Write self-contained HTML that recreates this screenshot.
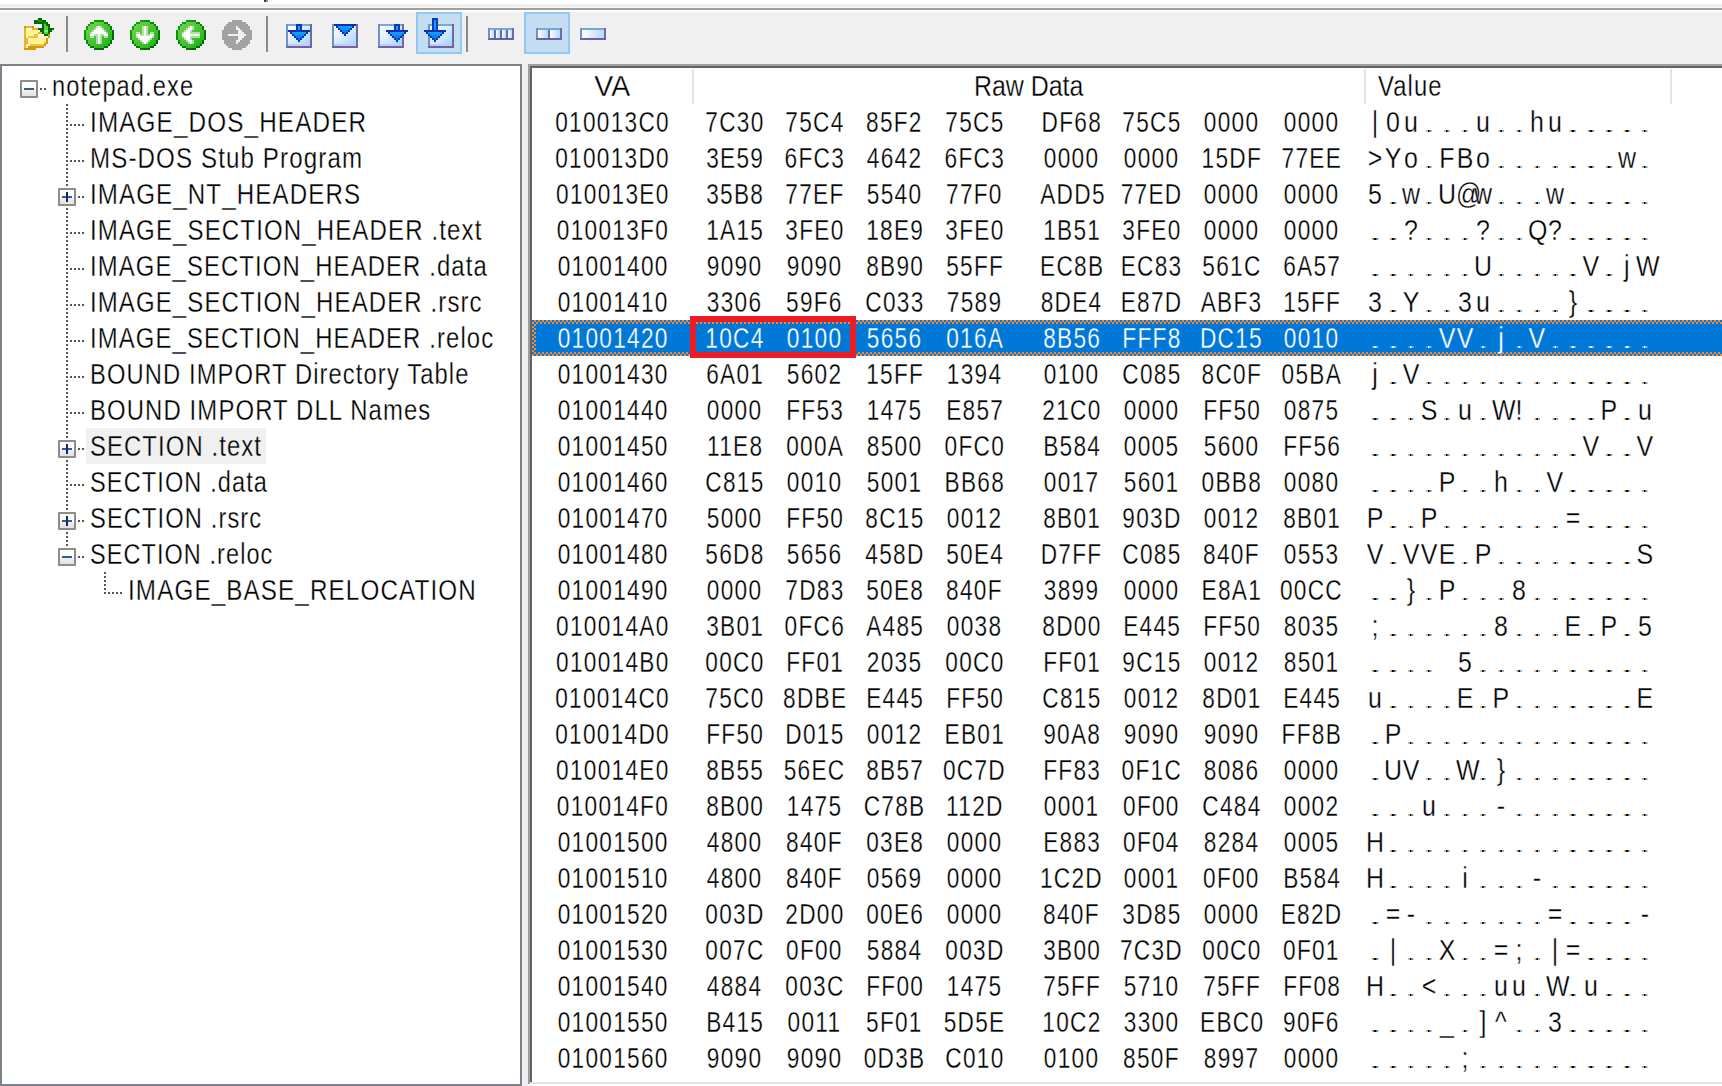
<!DOCTYPE html>
<html><head><meta charset="utf-8"><style>
*{margin:0;padding:0;box-sizing:border-box}
html,body{width:1722px;height:1086px;overflow:hidden;background:#f0f0f0}
body{position:relative;font-family:"Liberation Sans",sans-serif;color:#000}
.t,.c,.v{-webkit-text-stroke:0.3px #fff}
.s{-webkit-text-stroke:0.3px #0078d7}
.a{position:absolute}
.t{position:absolute;height:36px;line-height:36px;font-size:29px;white-space:pre;transform-origin:0 0}
.ts{transform:scaleX(0.82);letter-spacing:1.36px}
.c{position:absolute;height:36px;line-height:36px;font-size:29px;white-space:pre;text-align:center}
.c span{display:inline-block;transform:scaleX(0.78);letter-spacing:1.66px;margin-right:-1.66px}
.v{position:absolute;height:36px;line-height:36px;font-size:29px;white-space:pre;transform:scaleX(0.86);transform-origin:0 0}
.v span{display:inline-block;width:20.93px;text-align:center}
.v i{display:inline-block;width:2.33px;height:2px;background:#000;box-shadow:-2.33px 0 0 #f2b060,2.33px 0 0 #60b0f0}
.v.s i{background:#fff;box-shadow:-2.33px 0 0 #4a8ee0,2.33px 0 0 #5ab4f0}
.box{position:absolute;width:18px;height:18px;border:2px solid #8c8c8c;border-radius:1px;background:linear-gradient(#fff 0,#fff 45%,#f0f0f0 60%,#e2e2e2 100%)}
.hb{position:absolute;left:2px;top:6px;width:10px;height:2px;background:#3a56a4}
.vb{position:absolute;left:6px;top:2px;width:2px;height:10px;background:#102a6c}
.dh{position:absolute;height:2px;background:repeating-linear-gradient(90deg,#555 0 2px,transparent 2px 4px)}
.dv{position:absolute;width:2px;background:repeating-linear-gradient(180deg,#555 0 2px,transparent 2px 4px)}
.sep{position:absolute;top:16px;width:2px;height:36px;background:#8a8a8a}
</style></head><body>

<div class="a" style="left:0;top:0;width:1722px;height:4px;background:#fff"></div>
<div class="a" style="left:0;top:4px;width:1722px;height:3px;background:#f0f0f0"></div>
<div class="a" style="left:0;top:7px;width:1722px;height:1px;background:#fafafa"></div>
<div class="a" style="left:0;top:8px;width:1722px;height:2px;background:#a0a0a0"></div>
<div class="a" style="left:0;top:10px;width:1722px;height:2px;background:#fff"></div>
<div class="a" style="left:264px;top:0;width:2px;height:2px;background:#902000"></div><div class="a" style="left:266px;top:0;width:2px;height:2px;background:#4aa8ff"></div>
<div class="sep" style="left:66px"></div>
<div class="sep" style="left:266px"></div>
<div class="sep" style="left:466px"></div>
<svg class="a" style="left:0;top:0" width="700" height="64" shape-rendering="crispEdges"><rect x="38" y="18" width="4" height="2" fill="#006a00"/><rect x="34" y="20" width="4" height="2" fill="#006a00"/><rect x="38" y="20" width="4" height="2" fill="#1a8a1a"/><rect x="42" y="20" width="4" height="2" fill="#006a00"/><rect x="34" y="22" width="10" height="2" fill="#006a00"/><rect x="44" y="22" width="2" height="2" fill="#1a8a1a"/><rect x="46" y="22" width="2" height="2" fill="#006a00"/><rect x="42" y="24" width="2" height="2" fill="#006a00"/><rect x="44" y="24" width="2" height="2" fill="#5ccc44"/><rect x="46" y="24" width="4" height="2" fill="#006a00"/><rect x="24" y="26" width="2" height="2" fill="#d59a00"/><rect x="26" y="26" width="6" height="2" fill="#e6b432"/><rect x="32" y="26" width="2" height="2" fill="#d59a00"/><rect x="42" y="26" width="2" height="2" fill="#006a00"/><rect x="44" y="26" width="4" height="2" fill="#5ccc44"/><rect x="48" y="26" width="2" height="2" fill="#006a00"/><rect x="24" y="28" width="2" height="2" fill="#e6b432"/><rect x="26" y="28" width="4" height="2" fill="#fff2b8"/><rect x="30" y="28" width="2" height="2" fill="#fffbe6"/><rect x="32" y="28" width="6" height="2" fill="#e6b432"/><rect x="38" y="28" width="6" height="2" fill="#006a00"/><rect x="44" y="28" width="4" height="2" fill="#5ccc44"/><rect x="48" y="28" width="6" height="2" fill="#006a00"/><rect x="24" y="30" width="2" height="2" fill="#e6b432"/><rect x="26" y="30" width="12" height="2" fill="#fff58c"/><rect x="38" y="30" width="2" height="2" fill="#fffbe6"/><rect x="40" y="30" width="4" height="2" fill="#006a00"/><rect x="44" y="30" width="4" height="2" fill="#8af070"/><rect x="48" y="30" width="4" height="2" fill="#006a00"/><rect x="24" y="32" width="2" height="2" fill="#e6b432"/><rect x="26" y="32" width="12" height="2" fill="#fff58c"/><rect x="38" y="32" width="4" height="2" fill="#e6b432"/><rect x="42" y="32" width="2" height="2" fill="#006a00"/><rect x="44" y="32" width="4" height="2" fill="#5ccc44"/><rect x="48" y="32" width="2" height="2" fill="#006a00"/><rect x="24" y="34" width="2" height="2" fill="#e6b432"/><rect x="26" y="34" width="8" height="2" fill="#fff58c"/><rect x="34" y="34" width="4" height="2" fill="#e9c257"/><rect x="38" y="34" width="6" height="2" fill="#fffbe6"/><rect x="44" y="34" width="4" height="2" fill="#006a00"/><rect x="48" y="34" width="2" height="2" fill="#d59a00"/><rect x="24" y="36" width="2" height="2" fill="#e6b432"/><rect x="26" y="36" width="2" height="2" fill="#fff2b8"/><rect x="28" y="36" width="10" height="2" fill="#e9c257"/><rect x="38" y="36" width="4" height="2" fill="#fffbe6"/><rect x="42" y="36" width="2" height="2" fill="#fff58c"/><rect x="44" y="36" width="4" height="2" fill="#fff2b8"/><rect x="48" y="36" width="2" height="2" fill="#d59a00"/><rect x="24" y="38" width="4" height="2" fill="#e6b432"/><rect x="28" y="38" width="2" height="2" fill="#fff2b8"/><rect x="30" y="38" width="14" height="2" fill="#fff58c"/><rect x="44" y="38" width="2" height="2" fill="#fff2b8"/><rect x="46" y="38" width="2" height="2" fill="#d59a00"/><rect x="24" y="40" width="4" height="2" fill="#e6b432"/><rect x="28" y="40" width="2" height="2" fill="#fff2b8"/><rect x="30" y="40" width="14" height="2" fill="#fff58c"/><rect x="44" y="40" width="2" height="2" fill="#fff2b8"/><rect x="46" y="40" width="2" height="2" fill="#d59a00"/><rect x="24" y="42" width="4" height="2" fill="#e6b432"/><rect x="28" y="42" width="2" height="2" fill="#fff2b8"/><rect x="30" y="42" width="14" height="2" fill="#fff58c"/><rect x="44" y="42" width="2" height="2" fill="#e6b432"/><rect x="46" y="42" width="2" height="2" fill="#d59a00"/><rect x="24" y="44" width="2" height="2" fill="#e6b432"/><rect x="26" y="44" width="4" height="2" fill="#fff2b8"/><rect x="30" y="44" width="14" height="2" fill="#e9c257"/><rect x="44" y="44" width="2" height="2" fill="#d59a00"/><rect x="24" y="46" width="2" height="2" fill="#e6b432"/><rect x="26" y="46" width="2" height="2" fill="#fff2b8"/><rect x="28" y="46" width="16" height="2" fill="#d59a00"/><rect x="24" y="48" width="12" height="2" fill="#d59a00"/><rect x="94" y="20" width="2" height="2" fill="#00a400"/><rect x="96" y="20" width="2" height="2" fill="#00a100"/><rect x="98" y="20" width="2" height="2" fill="#009e00"/><rect x="100" y="20" width="2" height="2" fill="#009a00"/><rect x="102" y="20" width="2" height="2" fill="#009700"/><rect x="90" y="22" width="2" height="2" fill="#00a700"/><rect x="92" y="22" width="2" height="2" fill="#00a400"/><rect x="94" y="22" width="2" height="2" fill="#6acc4a"/><rect x="96" y="22" width="2" height="2" fill="#66cb48"/><rect x="98" y="22" width="2" height="2" fill="#61ca45"/><rect x="100" y="22" width="2" height="2" fill="#5dc842"/><rect x="102" y="22" width="2" height="2" fill="#59c740"/><rect x="104" y="22" width="2" height="2" fill="#009100"/><rect x="106" y="22" width="2" height="2" fill="#008d00"/><rect x="88" y="24" width="2" height="2" fill="#00a700"/><rect x="90" y="24" width="2" height="2" fill="#6ece4d"/><rect x="92" y="24" width="2" height="2" fill="#6acc4a"/><rect x="94" y="24" width="2" height="2" fill="#66cb48"/><rect x="96" y="24" width="2" height="2" fill="#61ca45"/><rect x="98" y="24" width="2" height="2" fill="#5dc842"/><rect x="100" y="24" width="2" height="2" fill="#59c740"/><rect x="102" y="24" width="2" height="2" fill="#55c63d"/><rect x="104" y="24" width="2" height="2" fill="#51c53a"/><rect x="106" y="24" width="2" height="2" fill="#4dc338"/><rect x="108" y="24" width="2" height="2" fill="#008700"/><rect x="86" y="26" width="2" height="2" fill="#00a700"/><rect x="88" y="26" width="2" height="2" fill="#6ece4d"/><rect x="90" y="26" width="2" height="2" fill="#6acc4a"/><rect x="92" y="26" width="2" height="2" fill="#66cb48"/><rect x="94" y="26" width="2" height="2" fill="#61ca45"/><rect x="96" y="26" width="2" height="2" fill="#b6e6aa"/><rect x="98" y="26" width="2" height="2" fill="#ffffff"/><rect x="100" y="26" width="2" height="2" fill="#b2e5a8"/><rect x="102" y="26" width="2" height="2" fill="#51c53a"/><rect x="104" y="26" width="2" height="2" fill="#4dc338"/><rect x="106" y="26" width="2" height="2" fill="#49c235"/><rect x="108" y="26" width="2" height="2" fill="#45c132"/><rect x="110" y="26" width="2" height="2" fill="#008100"/><rect x="86" y="28" width="2" height="2" fill="#00a400"/><rect x="88" y="28" width="2" height="2" fill="#6acc4a"/><rect x="90" y="28" width="2" height="2" fill="#66cb48"/><rect x="92" y="28" width="2" height="2" fill="#61ca45"/><rect x="94" y="28" width="2" height="2" fill="#b6e6aa"/><rect x="96" y="28" width="2" height="2" fill="#ffffff"/><rect x="98" y="28" width="2" height="2" fill="#ffffff"/><rect x="100" y="28" width="2" height="2" fill="#ffffff"/><rect x="102" y="28" width="2" height="2" fill="#afe4a5"/><rect x="104" y="28" width="2" height="2" fill="#49c235"/><rect x="106" y="28" width="2" height="2" fill="#45c132"/><rect x="108" y="28" width="2" height="2" fill="#41bf30"/><rect x="110" y="28" width="2" height="2" fill="#007d00"/><rect x="84" y="30" width="2" height="2" fill="#00a400"/><rect x="86" y="30" width="2" height="2" fill="#6acc4a"/><rect x="88" y="30" width="2" height="2" fill="#66cb48"/><rect x="90" y="30" width="2" height="2" fill="#61ca45"/><rect x="92" y="30" width="2" height="2" fill="#b6e6aa"/><rect x="94" y="30" width="2" height="2" fill="#ffffff"/><rect x="96" y="30" width="2" height="2" fill="#ffffff"/><rect x="98" y="30" width="2" height="2" fill="#ffffff"/><rect x="100" y="30" width="2" height="2" fill="#ffffff"/><rect x="102" y="30" width="2" height="2" fill="#ffffff"/><rect x="104" y="30" width="2" height="2" fill="#abe3a3"/><rect x="106" y="30" width="2" height="2" fill="#41bf30"/><rect x="108" y="30" width="2" height="2" fill="#3dbe2d"/><rect x="110" y="30" width="2" height="2" fill="#39bd2a"/><rect x="112" y="30" width="2" height="2" fill="#007700"/><rect x="84" y="32" width="2" height="2" fill="#00a100"/><rect x="86" y="32" width="2" height="2" fill="#66cb48"/><rect x="88" y="32" width="2" height="2" fill="#61ca45"/><rect x="90" y="32" width="2" height="2" fill="#b6e6aa"/><rect x="92" y="32" width="2" height="2" fill="#ffffff"/><rect x="94" y="32" width="2" height="2" fill="#ffffff"/><rect x="96" y="32" width="2" height="2" fill="#ffffff"/><rect x="98" y="32" width="2" height="2" fill="#ffffff"/><rect x="100" y="32" width="2" height="2" fill="#ffffff"/><rect x="102" y="32" width="2" height="2" fill="#ffffff"/><rect x="104" y="32" width="2" height="2" fill="#ffffff"/><rect x="106" y="32" width="2" height="2" fill="#a8e2a0"/><rect x="108" y="32" width="2" height="2" fill="#39bd2a"/><rect x="110" y="32" width="2" height="2" fill="#35bc28"/><rect x="112" y="32" width="2" height="2" fill="#007400"/><rect x="84" y="34" width="2" height="2" fill="#009e00"/><rect x="86" y="34" width="2" height="2" fill="#61ca45"/><rect x="88" y="34" width="2" height="2" fill="#5dc842"/><rect x="90" y="34" width="2" height="2" fill="#ffffff"/><rect x="92" y="34" width="2" height="2" fill="#ffffff"/><rect x="94" y="34" width="2" height="2" fill="#b1e5a6"/><rect x="96" y="34" width="2" height="2" fill="#afe4a5"/><rect x="98" y="34" width="2" height="2" fill="#ffffff"/><rect x="100" y="34" width="2" height="2" fill="#abe3a3"/><rect x="102" y="34" width="2" height="2" fill="#aae2a2"/><rect x="104" y="34" width="2" height="2" fill="#ffffff"/><rect x="106" y="34" width="2" height="2" fill="#ffffff"/><rect x="108" y="34" width="2" height="2" fill="#35bc28"/><rect x="110" y="34" width="2" height="2" fill="#31ba25"/><rect x="112" y="34" width="2" height="2" fill="#007000"/><rect x="84" y="36" width="2" height="2" fill="#009a00"/><rect x="86" y="36" width="2" height="2" fill="#5dc842"/><rect x="88" y="36" width="2" height="2" fill="#59c740"/><rect x="90" y="36" width="2" height="2" fill="#b2e5a8"/><rect x="92" y="36" width="2" height="2" fill="#b1e5a6"/><rect x="94" y="36" width="2" height="2" fill="#4dc338"/><rect x="96" y="36" width="2" height="2" fill="#ade4a4"/><rect x="98" y="36" width="2" height="2" fill="#ffffff"/><rect x="100" y="36" width="2" height="2" fill="#aae2a2"/><rect x="102" y="36" width="2" height="2" fill="#3dbe2d"/><rect x="104" y="36" width="2" height="2" fill="#a6e19f"/><rect x="106" y="36" width="2" height="2" fill="#a4e19e"/><rect x="108" y="36" width="2" height="2" fill="#31ba25"/><rect x="110" y="36" width="2" height="2" fill="#2cb922"/><rect x="112" y="36" width="2" height="2" fill="#006d00"/><rect x="84" y="38" width="2" height="2" fill="#009700"/><rect x="86" y="38" width="2" height="2" fill="#59c740"/><rect x="88" y="38" width="2" height="2" fill="#55c63d"/><rect x="90" y="38" width="2" height="2" fill="#51c53a"/><rect x="92" y="38" width="2" height="2" fill="#4dc338"/><rect x="94" y="38" width="2" height="2" fill="#49c235"/><rect x="96" y="38" width="2" height="2" fill="#abe3a3"/><rect x="98" y="38" width="2" height="2" fill="#ffffff"/><rect x="100" y="38" width="2" height="2" fill="#a8e2a0"/><rect x="102" y="38" width="2" height="2" fill="#39bd2a"/><rect x="104" y="38" width="2" height="2" fill="#35bc28"/><rect x="106" y="38" width="2" height="2" fill="#31ba25"/><rect x="108" y="38" width="2" height="2" fill="#2cb922"/><rect x="110" y="38" width="2" height="2" fill="#28b820"/><rect x="112" y="38" width="2" height="2" fill="#006a00"/><rect x="86" y="40" width="2" height="2" fill="#009100"/><rect x="88" y="40" width="2" height="2" fill="#51c53a"/><rect x="90" y="40" width="2" height="2" fill="#4dc338"/><rect x="92" y="40" width="2" height="2" fill="#49c235"/><rect x="94" y="40" width="2" height="2" fill="#45c132"/><rect x="96" y="40" width="2" height="2" fill="#aae2a2"/><rect x="98" y="40" width="2" height="2" fill="#ffffff"/><rect x="100" y="40" width="2" height="2" fill="#a6e19f"/><rect x="102" y="40" width="2" height="2" fill="#35bc28"/><rect x="104" y="40" width="2" height="2" fill="#31ba25"/><rect x="106" y="40" width="2" height="2" fill="#2cb922"/><rect x="108" y="40" width="2" height="2" fill="#28b820"/><rect x="110" y="40" width="2" height="2" fill="#006a00"/><rect x="86" y="42" width="2" height="2" fill="#008d00"/><rect x="88" y="42" width="2" height="2" fill="#4dc338"/><rect x="90" y="42" width="2" height="2" fill="#49c235"/><rect x="92" y="42" width="2" height="2" fill="#45c132"/><rect x="94" y="42" width="2" height="2" fill="#41bf30"/><rect x="96" y="42" width="2" height="2" fill="#a8e2a0"/><rect x="98" y="42" width="2" height="2" fill="#ffffff"/><rect x="100" y="42" width="2" height="2" fill="#a4e19e"/><rect x="102" y="42" width="2" height="2" fill="#31ba25"/><rect x="104" y="42" width="2" height="2" fill="#2cb922"/><rect x="106" y="42" width="2" height="2" fill="#28b820"/><rect x="108" y="42" width="2" height="2" fill="#24b61d"/><rect x="110" y="42" width="2" height="2" fill="#006700"/><rect x="88" y="44" width="2" height="2" fill="#008700"/><rect x="90" y="44" width="2" height="2" fill="#45c132"/><rect x="92" y="44" width="2" height="2" fill="#41bf30"/><rect x="94" y="44" width="2" height="2" fill="#3dbe2d"/><rect x="96" y="44" width="2" height="2" fill="#39bd2a"/><rect x="98" y="44" width="2" height="2" fill="#35bc28"/><rect x="100" y="44" width="2" height="2" fill="#31ba25"/><rect x="102" y="44" width="2" height="2" fill="#2cb922"/><rect x="104" y="44" width="2" height="2" fill="#28b820"/><rect x="106" y="44" width="2" height="2" fill="#24b61d"/><rect x="108" y="44" width="2" height="2" fill="#006700"/><rect x="90" y="46" width="2" height="2" fill="#008100"/><rect x="92" y="46" width="2" height="2" fill="#007d00"/><rect x="94" y="46" width="2" height="2" fill="#39bd2a"/><rect x="96" y="46" width="2" height="2" fill="#35bc28"/><rect x="98" y="46" width="2" height="2" fill="#31ba25"/><rect x="100" y="46" width="2" height="2" fill="#2cb922"/><rect x="102" y="46" width="2" height="2" fill="#28b820"/><rect x="104" y="46" width="2" height="2" fill="#006a00"/><rect x="106" y="46" width="2" height="2" fill="#006700"/><rect x="94" y="48" width="2" height="2" fill="#007700"/><rect x="96" y="48" width="2" height="2" fill="#007400"/><rect x="98" y="48" width="2" height="2" fill="#007000"/><rect x="100" y="48" width="2" height="2" fill="#006d00"/><rect x="102" y="48" width="2" height="2" fill="#006a00"/><rect x="140" y="20" width="2" height="2" fill="#00a400"/><rect x="142" y="20" width="2" height="2" fill="#00a100"/><rect x="144" y="20" width="2" height="2" fill="#009e00"/><rect x="146" y="20" width="2" height="2" fill="#009a00"/><rect x="148" y="20" width="2" height="2" fill="#009700"/><rect x="136" y="22" width="2" height="2" fill="#00a700"/><rect x="138" y="22" width="2" height="2" fill="#00a400"/><rect x="140" y="22" width="2" height="2" fill="#6acc4a"/><rect x="142" y="22" width="2" height="2" fill="#66cb48"/><rect x="144" y="22" width="2" height="2" fill="#61ca45"/><rect x="146" y="22" width="2" height="2" fill="#5dc842"/><rect x="148" y="22" width="2" height="2" fill="#59c740"/><rect x="150" y="22" width="2" height="2" fill="#009100"/><rect x="152" y="22" width="2" height="2" fill="#008d00"/><rect x="134" y="24" width="2" height="2" fill="#00a700"/><rect x="136" y="24" width="2" height="2" fill="#6ece4d"/><rect x="138" y="24" width="2" height="2" fill="#6acc4a"/><rect x="140" y="24" width="2" height="2" fill="#66cb48"/><rect x="142" y="24" width="2" height="2" fill="#61ca45"/><rect x="144" y="24" width="2" height="2" fill="#5dc842"/><rect x="146" y="24" width="2" height="2" fill="#59c740"/><rect x="148" y="24" width="2" height="2" fill="#55c63d"/><rect x="150" y="24" width="2" height="2" fill="#51c53a"/><rect x="152" y="24" width="2" height="2" fill="#4dc338"/><rect x="154" y="24" width="2" height="2" fill="#008700"/><rect x="132" y="26" width="2" height="2" fill="#00a700"/><rect x="134" y="26" width="2" height="2" fill="#6ece4d"/><rect x="136" y="26" width="2" height="2" fill="#6acc4a"/><rect x="138" y="26" width="2" height="2" fill="#66cb48"/><rect x="140" y="26" width="2" height="2" fill="#61ca45"/><rect x="142" y="26" width="2" height="2" fill="#b6e6aa"/><rect x="144" y="26" width="2" height="2" fill="#ffffff"/><rect x="146" y="26" width="2" height="2" fill="#b2e5a8"/><rect x="148" y="26" width="2" height="2" fill="#51c53a"/><rect x="150" y="26" width="2" height="2" fill="#4dc338"/><rect x="152" y="26" width="2" height="2" fill="#49c235"/><rect x="154" y="26" width="2" height="2" fill="#45c132"/><rect x="156" y="26" width="2" height="2" fill="#008100"/><rect x="132" y="28" width="2" height="2" fill="#00a400"/><rect x="134" y="28" width="2" height="2" fill="#6acc4a"/><rect x="136" y="28" width="2" height="2" fill="#66cb48"/><rect x="138" y="28" width="2" height="2" fill="#61ca45"/><rect x="140" y="28" width="2" height="2" fill="#5dc842"/><rect x="142" y="28" width="2" height="2" fill="#b4e6a9"/><rect x="144" y="28" width="2" height="2" fill="#ffffff"/><rect x="146" y="28" width="2" height="2" fill="#b1e5a6"/><rect x="148" y="28" width="2" height="2" fill="#4dc338"/><rect x="150" y="28" width="2" height="2" fill="#49c235"/><rect x="152" y="28" width="2" height="2" fill="#45c132"/><rect x="154" y="28" width="2" height="2" fill="#41bf30"/><rect x="156" y="28" width="2" height="2" fill="#007d00"/><rect x="130" y="30" width="2" height="2" fill="#00a400"/><rect x="132" y="30" width="2" height="2" fill="#6acc4a"/><rect x="134" y="30" width="2" height="2" fill="#66cb48"/><rect x="136" y="30" width="2" height="2" fill="#61ca45"/><rect x="138" y="30" width="2" height="2" fill="#5dc842"/><rect x="140" y="30" width="2" height="2" fill="#59c740"/><rect x="142" y="30" width="2" height="2" fill="#b2e5a8"/><rect x="144" y="30" width="2" height="2" fill="#ffffff"/><rect x="146" y="30" width="2" height="2" fill="#afe4a5"/><rect x="148" y="30" width="2" height="2" fill="#49c235"/><rect x="150" y="30" width="2" height="2" fill="#45c132"/><rect x="152" y="30" width="2" height="2" fill="#41bf30"/><rect x="154" y="30" width="2" height="2" fill="#3dbe2d"/><rect x="156" y="30" width="2" height="2" fill="#39bd2a"/><rect x="158" y="30" width="2" height="2" fill="#007700"/><rect x="130" y="32" width="2" height="2" fill="#00a100"/><rect x="132" y="32" width="2" height="2" fill="#66cb48"/><rect x="134" y="32" width="2" height="2" fill="#61ca45"/><rect x="136" y="32" width="2" height="2" fill="#b6e6aa"/><rect x="138" y="32" width="2" height="2" fill="#b4e6a9"/><rect x="140" y="32" width="2" height="2" fill="#55c63d"/><rect x="142" y="32" width="2" height="2" fill="#b1e5a6"/><rect x="144" y="32" width="2" height="2" fill="#ffffff"/><rect x="146" y="32" width="2" height="2" fill="#ade4a4"/><rect x="148" y="32" width="2" height="2" fill="#45c132"/><rect x="150" y="32" width="2" height="2" fill="#aae2a2"/><rect x="152" y="32" width="2" height="2" fill="#a8e2a0"/><rect x="154" y="32" width="2" height="2" fill="#39bd2a"/><rect x="156" y="32" width="2" height="2" fill="#35bc28"/><rect x="158" y="32" width="2" height="2" fill="#007400"/><rect x="130" y="34" width="2" height="2" fill="#009e00"/><rect x="132" y="34" width="2" height="2" fill="#61ca45"/><rect x="134" y="34" width="2" height="2" fill="#5dc842"/><rect x="136" y="34" width="2" height="2" fill="#ffffff"/><rect x="138" y="34" width="2" height="2" fill="#ffffff"/><rect x="140" y="34" width="2" height="2" fill="#b1e5a6"/><rect x="142" y="34" width="2" height="2" fill="#afe4a5"/><rect x="144" y="34" width="2" height="2" fill="#ffffff"/><rect x="146" y="34" width="2" height="2" fill="#abe3a3"/><rect x="148" y="34" width="2" height="2" fill="#aae2a2"/><rect x="150" y="34" width="2" height="2" fill="#ffffff"/><rect x="152" y="34" width="2" height="2" fill="#ffffff"/><rect x="154" y="34" width="2" height="2" fill="#35bc28"/><rect x="156" y="34" width="2" height="2" fill="#31ba25"/><rect x="158" y="34" width="2" height="2" fill="#007000"/><rect x="130" y="36" width="2" height="2" fill="#009a00"/><rect x="132" y="36" width="2" height="2" fill="#5dc842"/><rect x="134" y="36" width="2" height="2" fill="#59c740"/><rect x="136" y="36" width="2" height="2" fill="#b2e5a8"/><rect x="138" y="36" width="2" height="2" fill="#ffffff"/><rect x="140" y="36" width="2" height="2" fill="#ffffff"/><rect x="142" y="36" width="2" height="2" fill="#ffffff"/><rect x="144" y="36" width="2" height="2" fill="#ffffff"/><rect x="146" y="36" width="2" height="2" fill="#ffffff"/><rect x="148" y="36" width="2" height="2" fill="#ffffff"/><rect x="150" y="36" width="2" height="2" fill="#ffffff"/><rect x="152" y="36" width="2" height="2" fill="#a4e19e"/><rect x="154" y="36" width="2" height="2" fill="#31ba25"/><rect x="156" y="36" width="2" height="2" fill="#2cb922"/><rect x="158" y="36" width="2" height="2" fill="#006d00"/><rect x="130" y="38" width="2" height="2" fill="#009700"/><rect x="132" y="38" width="2" height="2" fill="#59c740"/><rect x="134" y="38" width="2" height="2" fill="#55c63d"/><rect x="136" y="38" width="2" height="2" fill="#51c53a"/><rect x="138" y="38" width="2" height="2" fill="#afe4a5"/><rect x="140" y="38" width="2" height="2" fill="#ffffff"/><rect x="142" y="38" width="2" height="2" fill="#ffffff"/><rect x="144" y="38" width="2" height="2" fill="#ffffff"/><rect x="146" y="38" width="2" height="2" fill="#ffffff"/><rect x="148" y="38" width="2" height="2" fill="#ffffff"/><rect x="150" y="38" width="2" height="2" fill="#a4e19e"/><rect x="152" y="38" width="2" height="2" fill="#31ba25"/><rect x="154" y="38" width="2" height="2" fill="#2cb922"/><rect x="156" y="38" width="2" height="2" fill="#28b820"/><rect x="158" y="38" width="2" height="2" fill="#006a00"/><rect x="132" y="40" width="2" height="2" fill="#009100"/><rect x="134" y="40" width="2" height="2" fill="#51c53a"/><rect x="136" y="40" width="2" height="2" fill="#4dc338"/><rect x="138" y="40" width="2" height="2" fill="#49c235"/><rect x="140" y="40" width="2" height="2" fill="#abe3a3"/><rect x="142" y="40" width="2" height="2" fill="#ffffff"/><rect x="144" y="40" width="2" height="2" fill="#ffffff"/><rect x="146" y="40" width="2" height="2" fill="#ffffff"/><rect x="148" y="40" width="2" height="2" fill="#a4e19e"/><rect x="150" y="40" width="2" height="2" fill="#31ba25"/><rect x="152" y="40" width="2" height="2" fill="#2cb922"/><rect x="154" y="40" width="2" height="2" fill="#28b820"/><rect x="156" y="40" width="2" height="2" fill="#006a00"/><rect x="132" y="42" width="2" height="2" fill="#008d00"/><rect x="134" y="42" width="2" height="2" fill="#4dc338"/><rect x="136" y="42" width="2" height="2" fill="#49c235"/><rect x="138" y="42" width="2" height="2" fill="#45c132"/><rect x="140" y="42" width="2" height="2" fill="#41bf30"/><rect x="142" y="42" width="2" height="2" fill="#a8e2a0"/><rect x="144" y="42" width="2" height="2" fill="#ffffff"/><rect x="146" y="42" width="2" height="2" fill="#a4e19e"/><rect x="148" y="42" width="2" height="2" fill="#31ba25"/><rect x="150" y="42" width="2" height="2" fill="#2cb922"/><rect x="152" y="42" width="2" height="2" fill="#28b820"/><rect x="154" y="42" width="2" height="2" fill="#24b61d"/><rect x="156" y="42" width="2" height="2" fill="#006700"/><rect x="134" y="44" width="2" height="2" fill="#008700"/><rect x="136" y="44" width="2" height="2" fill="#45c132"/><rect x="138" y="44" width="2" height="2" fill="#41bf30"/><rect x="140" y="44" width="2" height="2" fill="#3dbe2d"/><rect x="142" y="44" width="2" height="2" fill="#39bd2a"/><rect x="144" y="44" width="2" height="2" fill="#35bc28"/><rect x="146" y="44" width="2" height="2" fill="#31ba25"/><rect x="148" y="44" width="2" height="2" fill="#2cb922"/><rect x="150" y="44" width="2" height="2" fill="#28b820"/><rect x="152" y="44" width="2" height="2" fill="#24b61d"/><rect x="154" y="44" width="2" height="2" fill="#006700"/><rect x="136" y="46" width="2" height="2" fill="#008100"/><rect x="138" y="46" width="2" height="2" fill="#007d00"/><rect x="140" y="46" width="2" height="2" fill="#39bd2a"/><rect x="142" y="46" width="2" height="2" fill="#35bc28"/><rect x="144" y="46" width="2" height="2" fill="#31ba25"/><rect x="146" y="46" width="2" height="2" fill="#2cb922"/><rect x="148" y="46" width="2" height="2" fill="#28b820"/><rect x="150" y="46" width="2" height="2" fill="#006a00"/><rect x="152" y="46" width="2" height="2" fill="#006700"/><rect x="140" y="48" width="2" height="2" fill="#007700"/><rect x="142" y="48" width="2" height="2" fill="#007400"/><rect x="144" y="48" width="2" height="2" fill="#007000"/><rect x="146" y="48" width="2" height="2" fill="#006d00"/><rect x="148" y="48" width="2" height="2" fill="#006a00"/><rect x="186" y="20" width="2" height="2" fill="#00a400"/><rect x="188" y="20" width="2" height="2" fill="#00a100"/><rect x="190" y="20" width="2" height="2" fill="#009e00"/><rect x="192" y="20" width="2" height="2" fill="#009a00"/><rect x="194" y="20" width="2" height="2" fill="#009700"/><rect x="182" y="22" width="2" height="2" fill="#00a700"/><rect x="184" y="22" width="2" height="2" fill="#00a400"/><rect x="186" y="22" width="2" height="2" fill="#6acc4a"/><rect x="188" y="22" width="2" height="2" fill="#66cb48"/><rect x="190" y="22" width="2" height="2" fill="#61ca45"/><rect x="192" y="22" width="2" height="2" fill="#5dc842"/><rect x="194" y="22" width="2" height="2" fill="#59c740"/><rect x="196" y="22" width="2" height="2" fill="#009100"/><rect x="198" y="22" width="2" height="2" fill="#008d00"/><rect x="180" y="24" width="2" height="2" fill="#00a700"/><rect x="182" y="24" width="2" height="2" fill="#6ece4d"/><rect x="184" y="24" width="2" height="2" fill="#6acc4a"/><rect x="186" y="24" width="2" height="2" fill="#66cb48"/><rect x="188" y="24" width="2" height="2" fill="#61ca45"/><rect x="190" y="24" width="2" height="2" fill="#5dc842"/><rect x="192" y="24" width="2" height="2" fill="#59c740"/><rect x="194" y="24" width="2" height="2" fill="#55c63d"/><rect x="196" y="24" width="2" height="2" fill="#51c53a"/><rect x="198" y="24" width="2" height="2" fill="#4dc338"/><rect x="200" y="24" width="2" height="2" fill="#008700"/><rect x="178" y="26" width="2" height="2" fill="#00a700"/><rect x="180" y="26" width="2" height="2" fill="#6ece4d"/><rect x="182" y="26" width="2" height="2" fill="#6acc4a"/><rect x="184" y="26" width="2" height="2" fill="#66cb48"/><rect x="186" y="26" width="2" height="2" fill="#61ca45"/><rect x="188" y="26" width="2" height="2" fill="#b6e6aa"/><rect x="190" y="26" width="2" height="2" fill="#ffffff"/><rect x="192" y="26" width="2" height="2" fill="#b2e5a8"/><rect x="194" y="26" width="2" height="2" fill="#51c53a"/><rect x="196" y="26" width="2" height="2" fill="#4dc338"/><rect x="198" y="26" width="2" height="2" fill="#49c235"/><rect x="200" y="26" width="2" height="2" fill="#45c132"/><rect x="202" y="26" width="2" height="2" fill="#008100"/><rect x="178" y="28" width="2" height="2" fill="#00a400"/><rect x="180" y="28" width="2" height="2" fill="#6acc4a"/><rect x="182" y="28" width="2" height="2" fill="#66cb48"/><rect x="184" y="28" width="2" height="2" fill="#61ca45"/><rect x="186" y="28" width="2" height="2" fill="#b6e6aa"/><rect x="188" y="28" width="2" height="2" fill="#ffffff"/><rect x="190" y="28" width="2" height="2" fill="#ffffff"/><rect x="192" y="28" width="2" height="2" fill="#b1e5a6"/><rect x="194" y="28" width="2" height="2" fill="#4dc338"/><rect x="196" y="28" width="2" height="2" fill="#49c235"/><rect x="198" y="28" width="2" height="2" fill="#45c132"/><rect x="200" y="28" width="2" height="2" fill="#41bf30"/><rect x="202" y="28" width="2" height="2" fill="#007d00"/><rect x="176" y="30" width="2" height="2" fill="#00a400"/><rect x="178" y="30" width="2" height="2" fill="#6acc4a"/><rect x="180" y="30" width="2" height="2" fill="#66cb48"/><rect x="182" y="30" width="2" height="2" fill="#61ca45"/><rect x="184" y="30" width="2" height="2" fill="#b6e6aa"/><rect x="186" y="30" width="2" height="2" fill="#ffffff"/><rect x="188" y="30" width="2" height="2" fill="#ffffff"/><rect x="190" y="30" width="2" height="2" fill="#b1e5a6"/><rect x="192" y="30" width="2" height="2" fill="#4dc338"/><rect x="194" y="30" width="2" height="2" fill="#49c235"/><rect x="196" y="30" width="2" height="2" fill="#45c132"/><rect x="198" y="30" width="2" height="2" fill="#41bf30"/><rect x="200" y="30" width="2" height="2" fill="#3dbe2d"/><rect x="202" y="30" width="2" height="2" fill="#39bd2a"/><rect x="204" y="30" width="2" height="2" fill="#007700"/><rect x="176" y="32" width="2" height="2" fill="#00a100"/><rect x="178" y="32" width="2" height="2" fill="#66cb48"/><rect x="180" y="32" width="2" height="2" fill="#61ca45"/><rect x="182" y="32" width="2" height="2" fill="#b6e6aa"/><rect x="184" y="32" width="2" height="2" fill="#ffffff"/><rect x="186" y="32" width="2" height="2" fill="#ffffff"/><rect x="188" y="32" width="2" height="2" fill="#ffffff"/><rect x="190" y="32" width="2" height="2" fill="#afe4a5"/><rect x="192" y="32" width="2" height="2" fill="#ade4a4"/><rect x="194" y="32" width="2" height="2" fill="#abe3a3"/><rect x="196" y="32" width="2" height="2" fill="#aae2a2"/><rect x="198" y="32" width="2" height="2" fill="#a8e2a0"/><rect x="200" y="32" width="2" height="2" fill="#39bd2a"/><rect x="202" y="32" width="2" height="2" fill="#35bc28"/><rect x="204" y="32" width="2" height="2" fill="#007400"/><rect x="176" y="34" width="2" height="2" fill="#009e00"/><rect x="178" y="34" width="2" height="2" fill="#61ca45"/><rect x="180" y="34" width="2" height="2" fill="#5dc842"/><rect x="182" y="34" width="2" height="2" fill="#ffffff"/><rect x="184" y="34" width="2" height="2" fill="#ffffff"/><rect x="186" y="34" width="2" height="2" fill="#ffffff"/><rect x="188" y="34" width="2" height="2" fill="#ffffff"/><rect x="190" y="34" width="2" height="2" fill="#ffffff"/><rect x="192" y="34" width="2" height="2" fill="#ffffff"/><rect x="194" y="34" width="2" height="2" fill="#ffffff"/><rect x="196" y="34" width="2" height="2" fill="#ffffff"/><rect x="198" y="34" width="2" height="2" fill="#ffffff"/><rect x="200" y="34" width="2" height="2" fill="#35bc28"/><rect x="202" y="34" width="2" height="2" fill="#31ba25"/><rect x="204" y="34" width="2" height="2" fill="#007000"/><rect x="176" y="36" width="2" height="2" fill="#009a00"/><rect x="178" y="36" width="2" height="2" fill="#5dc842"/><rect x="180" y="36" width="2" height="2" fill="#59c740"/><rect x="182" y="36" width="2" height="2" fill="#b2e5a8"/><rect x="184" y="36" width="2" height="2" fill="#ffffff"/><rect x="186" y="36" width="2" height="2" fill="#ffffff"/><rect x="188" y="36" width="2" height="2" fill="#ffffff"/><rect x="190" y="36" width="2" height="2" fill="#abe3a3"/><rect x="192" y="36" width="2" height="2" fill="#aae2a2"/><rect x="194" y="36" width="2" height="2" fill="#a8e2a0"/><rect x="196" y="36" width="2" height="2" fill="#a6e19f"/><rect x="198" y="36" width="2" height="2" fill="#a4e19e"/><rect x="200" y="36" width="2" height="2" fill="#31ba25"/><rect x="202" y="36" width="2" height="2" fill="#2cb922"/><rect x="204" y="36" width="2" height="2" fill="#006d00"/><rect x="176" y="38" width="2" height="2" fill="#009700"/><rect x="178" y="38" width="2" height="2" fill="#59c740"/><rect x="180" y="38" width="2" height="2" fill="#55c63d"/><rect x="182" y="38" width="2" height="2" fill="#51c53a"/><rect x="184" y="38" width="2" height="2" fill="#afe4a5"/><rect x="186" y="38" width="2" height="2" fill="#ffffff"/><rect x="188" y="38" width="2" height="2" fill="#ffffff"/><rect x="190" y="38" width="2" height="2" fill="#aae2a2"/><rect x="192" y="38" width="2" height="2" fill="#3dbe2d"/><rect x="194" y="38" width="2" height="2" fill="#39bd2a"/><rect x="196" y="38" width="2" height="2" fill="#35bc28"/><rect x="198" y="38" width="2" height="2" fill="#31ba25"/><rect x="200" y="38" width="2" height="2" fill="#2cb922"/><rect x="202" y="38" width="2" height="2" fill="#28b820"/><rect x="204" y="38" width="2" height="2" fill="#006a00"/><rect x="178" y="40" width="2" height="2" fill="#009100"/><rect x="180" y="40" width="2" height="2" fill="#51c53a"/><rect x="182" y="40" width="2" height="2" fill="#4dc338"/><rect x="184" y="40" width="2" height="2" fill="#49c235"/><rect x="186" y="40" width="2" height="2" fill="#abe3a3"/><rect x="188" y="40" width="2" height="2" fill="#ffffff"/><rect x="190" y="40" width="2" height="2" fill="#ffffff"/><rect x="192" y="40" width="2" height="2" fill="#a6e19f"/><rect x="194" y="40" width="2" height="2" fill="#35bc28"/><rect x="196" y="40" width="2" height="2" fill="#31ba25"/><rect x="198" y="40" width="2" height="2" fill="#2cb922"/><rect x="200" y="40" width="2" height="2" fill="#28b820"/><rect x="202" y="40" width="2" height="2" fill="#006a00"/><rect x="178" y="42" width="2" height="2" fill="#008d00"/><rect x="180" y="42" width="2" height="2" fill="#4dc338"/><rect x="182" y="42" width="2" height="2" fill="#49c235"/><rect x="184" y="42" width="2" height="2" fill="#45c132"/><rect x="186" y="42" width="2" height="2" fill="#41bf30"/><rect x="188" y="42" width="2" height="2" fill="#a8e2a0"/><rect x="190" y="42" width="2" height="2" fill="#ffffff"/><rect x="192" y="42" width="2" height="2" fill="#a4e19e"/><rect x="194" y="42" width="2" height="2" fill="#31ba25"/><rect x="196" y="42" width="2" height="2" fill="#2cb922"/><rect x="198" y="42" width="2" height="2" fill="#28b820"/><rect x="200" y="42" width="2" height="2" fill="#24b61d"/><rect x="202" y="42" width="2" height="2" fill="#006700"/><rect x="180" y="44" width="2" height="2" fill="#008700"/><rect x="182" y="44" width="2" height="2" fill="#45c132"/><rect x="184" y="44" width="2" height="2" fill="#41bf30"/><rect x="186" y="44" width="2" height="2" fill="#3dbe2d"/><rect x="188" y="44" width="2" height="2" fill="#39bd2a"/><rect x="190" y="44" width="2" height="2" fill="#35bc28"/><rect x="192" y="44" width="2" height="2" fill="#31ba25"/><rect x="194" y="44" width="2" height="2" fill="#2cb922"/><rect x="196" y="44" width="2" height="2" fill="#28b820"/><rect x="198" y="44" width="2" height="2" fill="#24b61d"/><rect x="200" y="44" width="2" height="2" fill="#006700"/><rect x="182" y="46" width="2" height="2" fill="#008100"/><rect x="184" y="46" width="2" height="2" fill="#007d00"/><rect x="186" y="46" width="2" height="2" fill="#39bd2a"/><rect x="188" y="46" width="2" height="2" fill="#35bc28"/><rect x="190" y="46" width="2" height="2" fill="#31ba25"/><rect x="192" y="46" width="2" height="2" fill="#2cb922"/><rect x="194" y="46" width="2" height="2" fill="#28b820"/><rect x="196" y="46" width="2" height="2" fill="#006a00"/><rect x="198" y="46" width="2" height="2" fill="#006700"/><rect x="186" y="48" width="2" height="2" fill="#007700"/><rect x="188" y="48" width="2" height="2" fill="#007400"/><rect x="190" y="48" width="2" height="2" fill="#007000"/><rect x="192" y="48" width="2" height="2" fill="#006d00"/><rect x="194" y="48" width="2" height="2" fill="#006a00"/><rect x="232" y="20" width="10" height="2" fill="#a2a2a2"/><rect x="228" y="22" width="18" height="2" fill="#a2a2a2"/><rect x="226" y="24" width="22" height="2" fill="#a2a2a2"/><rect x="224" y="26" width="26" height="2" fill="#a2a2a2"/><rect x="224" y="28" width="26" height="2" fill="#a2a2a2"/><rect x="222" y="30" width="30" height="2" fill="#a2a2a2"/><rect x="222" y="32" width="30" height="2" fill="#a2a2a2"/><rect x="222" y="34" width="30" height="2" fill="#a2a2a2"/><rect x="222" y="36" width="30" height="2" fill="#a2a2a2"/><rect x="222" y="38" width="30" height="2" fill="#a2a2a2"/><rect x="224" y="40" width="26" height="2" fill="#a2a2a2"/><rect x="224" y="42" width="26" height="2" fill="#a2a2a2"/><rect x="226" y="44" width="22" height="2" fill="#a2a2a2"/><rect x="228" y="46" width="18" height="2" fill="#a2a2a2"/><rect x="232" y="48" width="10" height="2" fill="#a2a2a2"/><rect x="238" y="36" width="2" height="2" fill="#f0f0f0"/><rect x="244" y="34" width="2" height="2" fill="#f0f0f0"/><rect x="242" y="36" width="2" height="2" fill="#f0f0f0"/><rect x="228" y="34" width="2" height="2" fill="#f0f0f0"/><rect x="232" y="34" width="2" height="2" fill="#f0f0f0"/><rect x="236" y="26" width="2" height="2" fill="#f0f0f0"/><rect x="240" y="30" width="2" height="2" fill="#f0f0f0"/><rect x="234" y="34" width="2" height="2" fill="#f0f0f0"/><rect x="238" y="38" width="2" height="2" fill="#f0f0f0"/><rect x="242" y="32" width="2" height="2" fill="#f0f0f0"/><rect x="240" y="36" width="2" height="2" fill="#f0f0f0"/><rect x="238" y="32" width="2" height="2" fill="#f0f0f0"/><rect x="230" y="34" width="2" height="2" fill="#f0f0f0"/><rect x="236" y="28" width="2" height="2" fill="#f0f0f0"/><rect x="238" y="28" width="2" height="2" fill="#f0f0f0"/><rect x="236" y="34" width="2" height="2" fill="#f0f0f0"/><rect x="240" y="38" width="2" height="2" fill="#f0f0f0"/><rect x="238" y="34" width="2" height="2" fill="#f0f0f0"/><rect x="236" y="40" width="2" height="2" fill="#f0f0f0"/><rect x="240" y="32" width="2" height="2" fill="#f0f0f0"/><rect x="238" y="40" width="2" height="2" fill="#f0f0f0"/><rect x="242" y="34" width="2" height="2" fill="#f0f0f0"/><rect x="236" y="42" width="2" height="2" fill="#f0f0f0"/><rect x="240" y="34" width="2" height="2" fill="#f0f0f0"/><rect x="238" y="30" width="2" height="2" fill="#f0f0f0"/><rect x="416" y="12" width="46" height="42" fill="#90c8f6"/><rect x="418" y="14" width="42" height="38" fill="#c4ddf1"/><rect x="524" y="12" width="46" height="42" fill="#90c8f6"/><rect x="526" y="14" width="42" height="38" fill="#c4ddf1"/><defs></defs><rect x="286" y="24" width="26" height="24" fill="#6c6ca4"/><rect x="286" y="24" width="24" height="2" fill="#7aa6dc"/><rect x="286" y="24" width="2" height="22" fill="#7090cc"/><rect x="310" y="24" width="2" height="24" fill="#6a6aa6"/><rect x="288" y="46" width="22" height="2" fill="#6a64a0"/><rect x="288" y="26" width="22" height="18" fill="url(#bg)"/><rect x="288" y="44" width="22" height="2" fill="#c8c8fc"/><defs></defs><rect x="332" y="24" width="26" height="24" fill="#6c6ca4"/><rect x="332" y="24" width="24" height="2" fill="#7aa6dc"/><rect x="332" y="24" width="2" height="22" fill="#7090cc"/><rect x="356" y="24" width="2" height="24" fill="#6a6aa6"/><rect x="334" y="46" width="22" height="2" fill="#6a64a0"/><rect x="334" y="26" width="22" height="18" fill="url(#bg)"/><rect x="334" y="44" width="22" height="2" fill="#c8c8fc"/><defs></defs><rect x="378" y="24" width="26" height="24" fill="#6c6ca4"/><rect x="378" y="24" width="24" height="2" fill="#7aa6dc"/><rect x="378" y="24" width="2" height="22" fill="#7090cc"/><rect x="402" y="24" width="2" height="24" fill="#6a6aa6"/><rect x="380" y="46" width="22" height="2" fill="#6a64a0"/><rect x="380" y="26" width="22" height="18" fill="url(#bg)"/><rect x="380" y="44" width="22" height="2" fill="#c8c8fc"/><defs></defs><rect x="428" y="24" width="26" height="24" fill="#6c6ca4"/><rect x="428" y="24" width="24" height="2" fill="#7aa6dc"/><rect x="428" y="24" width="2" height="22" fill="#7090cc"/><rect x="452" y="24" width="2" height="24" fill="#6a6aa6"/><rect x="430" y="46" width="22" height="2" fill="#6a64a0"/><rect x="430" y="26" width="22" height="18" fill="url(#bg)"/><rect x="430" y="44" width="22" height="2" fill="#c8c8fc"/><rect x="296" y="24" width="6" height="8" fill="#0a3cb8"/><rect x="298" y="26" width="2" height="6" fill="#10a0ff"/><rect x="288" y="30" width="22" height="2" fill="#0a32b0"/><rect x="290" y="32" width="18" height="2" fill="#0a32b0"/><rect x="292" y="32" width="14" height="2" fill="#159af7"/><rect x="292" y="34" width="14" height="2" fill="#0a32b0"/><rect x="294" y="34" width="10" height="2" fill="#108bef"/><rect x="294" y="36" width="10" height="2" fill="#0a32b0"/><rect x="296" y="36" width="6" height="2" fill="#0a7de8"/><rect x="296" y="38" width="6" height="2" fill="#0a32b0"/><rect x="298" y="38" width="2" height="2" fill="#056ee0"/><rect x="298" y="40" width="2" height="2" fill="#0a32b0"/><rect x="334" y="24" width="22" height="2" fill="#0a32b0"/><rect x="336" y="26" width="18" height="2" fill="#0a32b0"/><rect x="338" y="26" width="14" height="2" fill="#159af7"/><rect x="338" y="28" width="14" height="2" fill="#0a32b0"/><rect x="340" y="28" width="10" height="2" fill="#108bef"/><rect x="340" y="30" width="10" height="2" fill="#0a32b0"/><rect x="342" y="30" width="6" height="2" fill="#0a7de8"/><rect x="342" y="32" width="6" height="2" fill="#0a32b0"/><rect x="344" y="32" width="2" height="2" fill="#056ee0"/><rect x="344" y="34" width="2" height="2" fill="#0a32b0"/><rect x="394" y="24" width="6" height="8" fill="#0a3cb8"/><rect x="396" y="26" width="2" height="6" fill="#10a0ff"/><rect x="386" y="30" width="22" height="2" fill="#0a32b0"/><rect x="388" y="32" width="18" height="2" fill="#0a32b0"/><rect x="390" y="32" width="14" height="2" fill="#159af7"/><rect x="390" y="34" width="14" height="2" fill="#0a32b0"/><rect x="392" y="34" width="10" height="2" fill="#108bef"/><rect x="392" y="36" width="10" height="2" fill="#0a32b0"/><rect x="394" y="36" width="6" height="2" fill="#0a7de8"/><rect x="394" y="38" width="6" height="2" fill="#0a32b0"/><rect x="396" y="38" width="2" height="2" fill="#056ee0"/><rect x="396" y="40" width="2" height="2" fill="#0a32b0"/><rect x="432" y="18" width="6" height="14" fill="#0a3cb8"/><rect x="434" y="20" width="2" height="12" fill="#10a0ff"/><rect x="424" y="30" width="22" height="2" fill="#0a32b0"/><rect x="426" y="32" width="18" height="2" fill="#0a32b0"/><rect x="428" y="32" width="14" height="2" fill="#159af7"/><rect x="428" y="34" width="14" height="2" fill="#0a32b0"/><rect x="430" y="34" width="10" height="2" fill="#108bef"/><rect x="430" y="36" width="10" height="2" fill="#0a32b0"/><rect x="432" y="36" width="6" height="2" fill="#0a7de8"/><rect x="432" y="38" width="6" height="2" fill="#0a32b0"/><rect x="434" y="38" width="2" height="2" fill="#056ee0"/><rect x="434" y="40" width="2" height="2" fill="#0a32b0"/><rect x="488" y="28" width="26" height="12" fill="#6c6ca6"/><rect x="488" y="28" width="24" height="2" fill="#78a4d8"/><rect x="488" y="28" width="2" height="10" fill="#7090cc"/><rect x="490" y="38" width="24" height="2" fill="#6a62a0"/><rect x="490" y="30" width="4" height="8" fill="url(#vg)"/><rect x="496" y="30" width="4" height="8" fill="url(#vg)"/><rect x="502" y="30" width="4" height="8" fill="url(#vg)"/><rect x="508" y="30" width="4" height="8" fill="url(#vg)"/><rect x="536" y="28" width="26" height="12" fill="#6c6ca6"/><rect x="536" y="28" width="24" height="2" fill="#78a4d8"/><rect x="536" y="28" width="2" height="10" fill="#7090cc"/><rect x="538" y="38" width="24" height="2" fill="#6a62a0"/><rect x="538" y="30" width="10" height="8" fill="url(#vg)"/><rect x="550" y="30" width="10" height="8" fill="url(#vg)"/><rect x="580" y="28" width="26" height="12" fill="#6c6ca6"/><rect x="580" y="28" width="24" height="2" fill="#78a4d8"/><rect x="580" y="28" width="2" height="10" fill="#7090cc"/><rect x="582" y="38" width="24" height="2" fill="#6a62a0"/><rect x="582" y="30" width="22" height="8" fill="url(#vg)"/><defs><linearGradient id="bg" x1="0" y1="0" x2="1" y2="1"><stop offset="0" stop-color="#ffffff"/><stop offset="0.5" stop-color="#d8ecff"/><stop offset="1" stop-color="#a4d4ff"/></linearGradient><linearGradient id="vg" x1="0" y1="0" x2="1" y2="0"><stop offset="0" stop-color="#ffffff"/><stop offset="1" stop-color="#b4d8ff"/></linearGradient></defs></svg>
<div class="a" style="left:0;top:64px;width:522px;height:1022px;background:#fff;border:2px solid #7c818a"></div>
<div class="t ts" style="left:52px;top:68px;transform:scaleX(0.8142)">notepad.exe</div>
<div class="box" style="left:20px;top:80px"><div class="hb"></div></div>
<div class="dh" style="left:40px;top:88px;width:6px"></div>
<div class="t ts" style="left:90px;top:104px;transform:scaleX(0.8368)">IMAGE_DOS_HEADER</div>
<div class="dh" style="left:66px;top:124px;width:18px"></div>
<div class="t ts" style="left:90px;top:140px;transform:scaleX(0.8307)">MS-DOS Stub Program</div>
<div class="dh" style="left:66px;top:160px;width:18px"></div>
<div class="t ts" style="left:90px;top:176px;transform:scaleX(0.8308)">IMAGE_NT_HEADERS</div>
<div class="box" style="left:58px;top:188px"><div class="hb"></div><div class="vb"></div></div>
<div class="dh" style="left:78px;top:196px;width:6px"></div>
<div class="t ts" style="left:90px;top:212px;transform:scaleX(0.8285)">IMAGE_SECTION_HEADER .text</div>
<div class="dh" style="left:66px;top:232px;width:18px"></div>
<div class="t ts" style="left:90px;top:248px;transform:scaleX(0.8231)">IMAGE_SECTION_HEADER .data</div>
<div class="dh" style="left:66px;top:268px;width:18px"></div>
<div class="t ts" style="left:90px;top:284px;transform:scaleX(0.8263)">IMAGE_SECTION_HEADER .rsrc</div>
<div class="dh" style="left:66px;top:304px;width:18px"></div>
<div class="t ts" style="left:90px;top:320px;transform:scaleX(0.8231)">IMAGE_SECTION_HEADER .reloc</div>
<div class="dh" style="left:66px;top:340px;width:18px"></div>
<div class="t ts" style="left:90px;top:356px;transform:scaleX(0.8187)">BOUND IMPORT Directory Table</div>
<div class="dh" style="left:66px;top:376px;width:18px"></div>
<div class="t ts" style="left:90px;top:392px;transform:scaleX(0.8236)">BOUND IMPORT DLL Names</div>
<div class="dh" style="left:66px;top:412px;width:18px"></div>
<div class="a" style="left:86px;top:428px;width:180px;height:36px;background:#f0f0f0"></div>
<div class="t ts" style="left:90px;top:428px;transform:scaleX(0.8214);-webkit-text-stroke-color:#f0f0f0">SECTION .text</div>
<div class="box" style="left:58px;top:440px"><div class="hb"></div><div class="vb"></div></div>
<div class="dh" style="left:78px;top:448px;width:6px"></div>
<div class="t ts" style="left:90px;top:464px;transform:scaleX(0.8126)">SECTION .data</div>
<div class="dh" style="left:66px;top:484px;width:18px"></div>
<div class="t ts" style="left:90px;top:500px;transform:scaleX(0.8166)">SECTION .rsrc</div>
<div class="box" style="left:58px;top:512px"><div class="hb"></div><div class="vb"></div></div>
<div class="dh" style="left:78px;top:520px;width:6px"></div>
<div class="t ts" style="left:90px;top:536px;transform:scaleX(0.8084)">SECTION .reloc</div>
<div class="box" style="left:58px;top:548px"><div class="hb"></div></div>
<div class="dh" style="left:78px;top:556px;width:6px"></div>
<div class="t ts" style="left:128px;top:572px;transform:scaleX(0.8345)">IMAGE_BASE_RELOCATION</div>
<div class="dh" style="left:104px;top:592px;width:18px"></div>
<div class="dv" style="left:66px;top:104px;height:84px"></div>
<div class="dv" style="left:66px;top:208px;height:232px"></div>
<div class="dv" style="left:66px;top:460px;height:52px"></div>
<div class="dv" style="left:66px;top:532px;height:16px"></div>
<div class="dv" style="left:104px;top:572px;height:22px"></div>
<div class="a" style="left:528px;top:64px;width:1194px;height:1022px;background:#fff"></div>
<div class="a" style="left:528px;top:64px;width:1194px;height:2px;background:#a0a0a0"></div>
<div class="a" style="left:528px;top:64px;width:2px;height:1020px;background:#a0a0a0"></div>
<div class="a" style="left:530px;top:66px;width:1192px;height:2px;background:#646464"></div>
<div class="a" style="left:530px;top:66px;width:2px;height:1016px;background:#646464"></div>
<div class="a" style="left:530px;top:1082px;width:1192px;height:2px;background:#e3e3e3"></div>
<div class="c" style="left:532px;top:68px;width:160px"><span style="transform:scaleX(0.98);letter-spacing:0;margin-right:0">VA</span></div>
<div class="c" style="left:694px;top:68px;width:670px"><span style="transform:scaleX(0.86);letter-spacing:0;margin-right:0">Raw Data</span></div>
<div class="t ts" style="left:1378px;top:68px">Value</div>
<div class="a" style="left:692px;top:69px;width:2px;height:35px;background:#e5e5e5"></div>
<div class="a" style="left:1364px;top:69px;width:2px;height:35px;background:#e5e5e5"></div>
<div class="a" style="left:1670px;top:69px;width:2px;height:35px;background:#e5e5e5"></div>
<div class="a" style="left:532px;top:320px;width:1200px;height:36px;background:#0078d7"></div>
<div class="a" style="left:532px;top:320px;width:1200px;height:4px;background-image:repeating-conic-gradient(#ff8728 0 25%, #0078d7 0 50%);background-size:4px 4px"></div>
<div class="a" style="left:532px;top:352px;width:1200px;height:4px;background-image:repeating-conic-gradient(#ff8728 0 25%, #0078d7 0 50%);background-size:4px 4px"></div>
<div class="a" style="left:532px;top:320px;width:4px;height:36px;background-image:repeating-conic-gradient(#ff8728 0 25%, #0078d7 0 50%);background-size:4px 4px"></div>
<div class="c" style="left:532px;top:104px;width:160px;color:#000"><span>010013C0</span></div>
<div class="c" style="left:694px;top:104px;width:80px;color:#000"><span>7C30</span></div>
<div class="c" style="left:774px;top:104px;width:80px;color:#000"><span>75C4</span></div>
<div class="c" style="left:854px;top:104px;width:80px;color:#000"><span>85F2</span></div>
<div class="c" style="left:934px;top:104px;width:80px;color:#000"><span>75C5</span></div>
<div class="c" style="left:1031px;top:104px;width:80px;color:#000"><span>DF68</span></div>
<div class="c" style="left:1111px;top:104px;width:80px;color:#000"><span>75C5</span></div>
<div class="c" style="left:1191px;top:104px;width:80px;color:#000"><span>0000</span></div>
<div class="c" style="left:1271px;top:104px;width:80px;color:#000"><span>0000</span></div>
<div class="v" style="left:1366px;top:104px;color:#000"><span>|</span><span>0</span><span>u</span><span><i></i></span><span><i></i></span><span><i></i></span><span>u</span><span><i></i></span><span><i></i></span><span>h</span><span>u</span><span><i></i></span><span><i></i></span><span><i></i></span><span><i></i></span><span><i></i></span></div>
<div class="c" style="left:532px;top:140px;width:160px;color:#000"><span>010013D0</span></div>
<div class="c" style="left:694px;top:140px;width:80px;color:#000"><span>3E59</span></div>
<div class="c" style="left:774px;top:140px;width:80px;color:#000"><span>6FC3</span></div>
<div class="c" style="left:854px;top:140px;width:80px;color:#000"><span>4642</span></div>
<div class="c" style="left:934px;top:140px;width:80px;color:#000"><span>6FC3</span></div>
<div class="c" style="left:1031px;top:140px;width:80px;color:#000"><span>0000</span></div>
<div class="c" style="left:1111px;top:140px;width:80px;color:#000"><span>0000</span></div>
<div class="c" style="left:1191px;top:140px;width:80px;color:#000"><span>15DF</span></div>
<div class="c" style="left:1271px;top:140px;width:80px;color:#000"><span>77EE</span></div>
<div class="v" style="left:1366px;top:140px;color:#000"><span>&gt;</span><span>Y</span><span>o</span><span><i></i></span><span>F</span><span>B</span><span>o</span><span><i></i></span><span><i></i></span><span><i></i></span><span><i></i></span><span><i></i></span><span><i></i></span><span><i></i></span><span>w</span><span><i></i></span></div>
<div class="c" style="left:532px;top:176px;width:160px;color:#000"><span>010013E0</span></div>
<div class="c" style="left:694px;top:176px;width:80px;color:#000"><span>35B8</span></div>
<div class="c" style="left:774px;top:176px;width:80px;color:#000"><span>77EF</span></div>
<div class="c" style="left:854px;top:176px;width:80px;color:#000"><span>5540</span></div>
<div class="c" style="left:934px;top:176px;width:80px;color:#000"><span>77F0</span></div>
<div class="c" style="left:1031px;top:176px;width:80px;color:#000"><span>ADD5</span></div>
<div class="c" style="left:1111px;top:176px;width:80px;color:#000"><span>77ED</span></div>
<div class="c" style="left:1191px;top:176px;width:80px;color:#000"><span>0000</span></div>
<div class="c" style="left:1271px;top:176px;width:80px;color:#000"><span>0000</span></div>
<div class="v" style="left:1366px;top:176px;color:#000"><span>5</span><span><i></i></span><span>w</span><span><i></i></span><span>U</span><span>@</span><span>w</span><span><i></i></span><span><i></i></span><span><i></i></span><span>w</span><span><i></i></span><span><i></i></span><span><i></i></span><span><i></i></span><span><i></i></span></div>
<div class="c" style="left:532px;top:212px;width:160px;color:#000"><span>010013F0</span></div>
<div class="c" style="left:694px;top:212px;width:80px;color:#000"><span>1A15</span></div>
<div class="c" style="left:774px;top:212px;width:80px;color:#000"><span>3FE0</span></div>
<div class="c" style="left:854px;top:212px;width:80px;color:#000"><span>18E9</span></div>
<div class="c" style="left:934px;top:212px;width:80px;color:#000"><span>3FE0</span></div>
<div class="c" style="left:1031px;top:212px;width:80px;color:#000"><span>1B51</span></div>
<div class="c" style="left:1111px;top:212px;width:80px;color:#000"><span>3FE0</span></div>
<div class="c" style="left:1191px;top:212px;width:80px;color:#000"><span>0000</span></div>
<div class="c" style="left:1271px;top:212px;width:80px;color:#000"><span>0000</span></div>
<div class="v" style="left:1366px;top:212px;color:#000"><span><i></i></span><span><i></i></span><span>?</span><span><i></i></span><span><i></i></span><span><i></i></span><span>?</span><span><i></i></span><span><i></i></span><span>Q</span><span>?</span><span><i></i></span><span><i></i></span><span><i></i></span><span><i></i></span><span><i></i></span></div>
<div class="c" style="left:532px;top:248px;width:160px;color:#000"><span>01001400</span></div>
<div class="c" style="left:694px;top:248px;width:80px;color:#000"><span>9090</span></div>
<div class="c" style="left:774px;top:248px;width:80px;color:#000"><span>9090</span></div>
<div class="c" style="left:854px;top:248px;width:80px;color:#000"><span>8B90</span></div>
<div class="c" style="left:934px;top:248px;width:80px;color:#000"><span>55FF</span></div>
<div class="c" style="left:1031px;top:248px;width:80px;color:#000"><span>EC8B</span></div>
<div class="c" style="left:1111px;top:248px;width:80px;color:#000"><span>EC83</span></div>
<div class="c" style="left:1191px;top:248px;width:80px;color:#000"><span>561C</span></div>
<div class="c" style="left:1271px;top:248px;width:80px;color:#000"><span>6A57</span></div>
<div class="v" style="left:1366px;top:248px;color:#000"><span><i></i></span><span><i></i></span><span><i></i></span><span><i></i></span><span><i></i></span><span><i></i></span><span>U</span><span><i></i></span><span><i></i></span><span><i></i></span><span><i></i></span><span><i></i></span><span>V</span><span><i></i></span><span>j</span><span>W</span></div>
<div class="c" style="left:532px;top:284px;width:160px;color:#000"><span>01001410</span></div>
<div class="c" style="left:694px;top:284px;width:80px;color:#000"><span>3306</span></div>
<div class="c" style="left:774px;top:284px;width:80px;color:#000"><span>59F6</span></div>
<div class="c" style="left:854px;top:284px;width:80px;color:#000"><span>C033</span></div>
<div class="c" style="left:934px;top:284px;width:80px;color:#000"><span>7589</span></div>
<div class="c" style="left:1031px;top:284px;width:80px;color:#000"><span>8DE4</span></div>
<div class="c" style="left:1111px;top:284px;width:80px;color:#000"><span>E87D</span></div>
<div class="c" style="left:1191px;top:284px;width:80px;color:#000"><span>ABF3</span></div>
<div class="c" style="left:1271px;top:284px;width:80px;color:#000"><span>15FF</span></div>
<div class="v" style="left:1366px;top:284px;color:#000"><span>3</span><span><i></i></span><span>Y</span><span><i></i></span><span><i></i></span><span>3</span><span>u</span><span><i></i></span><span><i></i></span><span><i></i></span><span><i></i></span><span>}</span><span><i></i></span><span><i></i></span><span><i></i></span><span><i></i></span></div>
<div class="c s" style="left:532px;top:320px;width:160px;color:#fff"><span>01001420</span></div>
<div class="c s" style="left:694px;top:320px;width:80px;color:#fff"><span>10C4</span></div>
<div class="c s" style="left:774px;top:320px;width:80px;color:#fff"><span>0100</span></div>
<div class="c s" style="left:854px;top:320px;width:80px;color:#fff"><span>5656</span></div>
<div class="c s" style="left:934px;top:320px;width:80px;color:#fff"><span>016A</span></div>
<div class="c s" style="left:1031px;top:320px;width:80px;color:#fff"><span>8B56</span></div>
<div class="c s" style="left:1111px;top:320px;width:80px;color:#fff"><span>FFF8</span></div>
<div class="c s" style="left:1191px;top:320px;width:80px;color:#fff"><span>DC15</span></div>
<div class="c s" style="left:1271px;top:320px;width:80px;color:#fff"><span>0010</span></div>
<div class="v s" style="left:1366px;top:320px;color:#fff"><span><i></i></span><span><i></i></span><span><i></i></span><span><i></i></span><span>V</span><span>V</span><span><i></i></span><span>j</span><span><i></i></span><span>V</span><span><i></i></span><span><i></i></span><span><i></i></span><span><i></i></span><span><i></i></span><span><i></i></span></div>
<div class="c" style="left:532px;top:356px;width:160px;color:#000"><span>01001430</span></div>
<div class="c" style="left:694px;top:356px;width:80px;color:#000"><span>6A01</span></div>
<div class="c" style="left:774px;top:356px;width:80px;color:#000"><span>5602</span></div>
<div class="c" style="left:854px;top:356px;width:80px;color:#000"><span>15FF</span></div>
<div class="c" style="left:934px;top:356px;width:80px;color:#000"><span>1394</span></div>
<div class="c" style="left:1031px;top:356px;width:80px;color:#000"><span>0100</span></div>
<div class="c" style="left:1111px;top:356px;width:80px;color:#000"><span>C085</span></div>
<div class="c" style="left:1191px;top:356px;width:80px;color:#000"><span>8C0F</span></div>
<div class="c" style="left:1271px;top:356px;width:80px;color:#000"><span>05BA</span></div>
<div class="v" style="left:1366px;top:356px;color:#000"><span>j</span><span><i></i></span><span>V</span><span><i></i></span><span><i></i></span><span><i></i></span><span><i></i></span><span><i></i></span><span><i></i></span><span><i></i></span><span><i></i></span><span><i></i></span><span><i></i></span><span><i></i></span><span><i></i></span><span><i></i></span></div>
<div class="c" style="left:532px;top:392px;width:160px;color:#000"><span>01001440</span></div>
<div class="c" style="left:694px;top:392px;width:80px;color:#000"><span>0000</span></div>
<div class="c" style="left:774px;top:392px;width:80px;color:#000"><span>FF53</span></div>
<div class="c" style="left:854px;top:392px;width:80px;color:#000"><span>1475</span></div>
<div class="c" style="left:934px;top:392px;width:80px;color:#000"><span>E857</span></div>
<div class="c" style="left:1031px;top:392px;width:80px;color:#000"><span>21C0</span></div>
<div class="c" style="left:1111px;top:392px;width:80px;color:#000"><span>0000</span></div>
<div class="c" style="left:1191px;top:392px;width:80px;color:#000"><span>FF50</span></div>
<div class="c" style="left:1271px;top:392px;width:80px;color:#000"><span>0875</span></div>
<div class="v" style="left:1366px;top:392px;color:#000"><span><i></i></span><span><i></i></span><span><i></i></span><span>S</span><span><i></i></span><span>u</span><span><i></i></span><span>W</span><span>!</span><span><i></i></span><span><i></i></span><span><i></i></span><span><i></i></span><span>P</span><span><i></i></span><span>u</span></div>
<div class="c" style="left:532px;top:428px;width:160px;color:#000"><span>01001450</span></div>
<div class="c" style="left:694px;top:428px;width:80px;color:#000"><span>11E8</span></div>
<div class="c" style="left:774px;top:428px;width:80px;color:#000"><span>000A</span></div>
<div class="c" style="left:854px;top:428px;width:80px;color:#000"><span>8500</span></div>
<div class="c" style="left:934px;top:428px;width:80px;color:#000"><span>0FC0</span></div>
<div class="c" style="left:1031px;top:428px;width:80px;color:#000"><span>B584</span></div>
<div class="c" style="left:1111px;top:428px;width:80px;color:#000"><span>0005</span></div>
<div class="c" style="left:1191px;top:428px;width:80px;color:#000"><span>5600</span></div>
<div class="c" style="left:1271px;top:428px;width:80px;color:#000"><span>FF56</span></div>
<div class="v" style="left:1366px;top:428px;color:#000"><span><i></i></span><span><i></i></span><span><i></i></span><span><i></i></span><span><i></i></span><span><i></i></span><span><i></i></span><span><i></i></span><span><i></i></span><span><i></i></span><span><i></i></span><span><i></i></span><span>V</span><span><i></i></span><span><i></i></span><span>V</span></div>
<div class="c" style="left:532px;top:464px;width:160px;color:#000"><span>01001460</span></div>
<div class="c" style="left:694px;top:464px;width:80px;color:#000"><span>C815</span></div>
<div class="c" style="left:774px;top:464px;width:80px;color:#000"><span>0010</span></div>
<div class="c" style="left:854px;top:464px;width:80px;color:#000"><span>5001</span></div>
<div class="c" style="left:934px;top:464px;width:80px;color:#000"><span>BB68</span></div>
<div class="c" style="left:1031px;top:464px;width:80px;color:#000"><span>0017</span></div>
<div class="c" style="left:1111px;top:464px;width:80px;color:#000"><span>5601</span></div>
<div class="c" style="left:1191px;top:464px;width:80px;color:#000"><span>0BB8</span></div>
<div class="c" style="left:1271px;top:464px;width:80px;color:#000"><span>0080</span></div>
<div class="v" style="left:1366px;top:464px;color:#000"><span><i></i></span><span><i></i></span><span><i></i></span><span><i></i></span><span>P</span><span><i></i></span><span><i></i></span><span>h</span><span><i></i></span><span><i></i></span><span>V</span><span><i></i></span><span><i></i></span><span><i></i></span><span><i></i></span><span><i></i></span></div>
<div class="c" style="left:532px;top:500px;width:160px;color:#000"><span>01001470</span></div>
<div class="c" style="left:694px;top:500px;width:80px;color:#000"><span>5000</span></div>
<div class="c" style="left:774px;top:500px;width:80px;color:#000"><span>FF50</span></div>
<div class="c" style="left:854px;top:500px;width:80px;color:#000"><span>8C15</span></div>
<div class="c" style="left:934px;top:500px;width:80px;color:#000"><span>0012</span></div>
<div class="c" style="left:1031px;top:500px;width:80px;color:#000"><span>8B01</span></div>
<div class="c" style="left:1111px;top:500px;width:80px;color:#000"><span>903D</span></div>
<div class="c" style="left:1191px;top:500px;width:80px;color:#000"><span>0012</span></div>
<div class="c" style="left:1271px;top:500px;width:80px;color:#000"><span>8B01</span></div>
<div class="v" style="left:1366px;top:500px;color:#000"><span>P</span><span><i></i></span><span><i></i></span><span>P</span><span><i></i></span><span><i></i></span><span><i></i></span><span><i></i></span><span><i></i></span><span><i></i></span><span><i></i></span><span>=</span><span><i></i></span><span><i></i></span><span><i></i></span><span><i></i></span></div>
<div class="c" style="left:532px;top:536px;width:160px;color:#000"><span>01001480</span></div>
<div class="c" style="left:694px;top:536px;width:80px;color:#000"><span>56D8</span></div>
<div class="c" style="left:774px;top:536px;width:80px;color:#000"><span>5656</span></div>
<div class="c" style="left:854px;top:536px;width:80px;color:#000"><span>458D</span></div>
<div class="c" style="left:934px;top:536px;width:80px;color:#000"><span>50E4</span></div>
<div class="c" style="left:1031px;top:536px;width:80px;color:#000"><span>D7FF</span></div>
<div class="c" style="left:1111px;top:536px;width:80px;color:#000"><span>C085</span></div>
<div class="c" style="left:1191px;top:536px;width:80px;color:#000"><span>840F</span></div>
<div class="c" style="left:1271px;top:536px;width:80px;color:#000"><span>0553</span></div>
<div class="v" style="left:1366px;top:536px;color:#000"><span>V</span><span><i></i></span><span>V</span><span>V</span><span>E</span><span><i></i></span><span>P</span><span><i></i></span><span><i></i></span><span><i></i></span><span><i></i></span><span><i></i></span><span><i></i></span><span><i></i></span><span><i></i></span><span>S</span></div>
<div class="c" style="left:532px;top:572px;width:160px;color:#000"><span>01001490</span></div>
<div class="c" style="left:694px;top:572px;width:80px;color:#000"><span>0000</span></div>
<div class="c" style="left:774px;top:572px;width:80px;color:#000"><span>7D83</span></div>
<div class="c" style="left:854px;top:572px;width:80px;color:#000"><span>50E8</span></div>
<div class="c" style="left:934px;top:572px;width:80px;color:#000"><span>840F</span></div>
<div class="c" style="left:1031px;top:572px;width:80px;color:#000"><span>3899</span></div>
<div class="c" style="left:1111px;top:572px;width:80px;color:#000"><span>0000</span></div>
<div class="c" style="left:1191px;top:572px;width:80px;color:#000"><span>E8A1</span></div>
<div class="c" style="left:1271px;top:572px;width:80px;color:#000"><span>00CC</span></div>
<div class="v" style="left:1366px;top:572px;color:#000"><span><i></i></span><span><i></i></span><span>}</span><span><i></i></span><span>P</span><span><i></i></span><span><i></i></span><span><i></i></span><span>8</span><span><i></i></span><span><i></i></span><span><i></i></span><span><i></i></span><span><i></i></span><span><i></i></span><span><i></i></span></div>
<div class="c" style="left:532px;top:608px;width:160px;color:#000"><span>010014A0</span></div>
<div class="c" style="left:694px;top:608px;width:80px;color:#000"><span>3B01</span></div>
<div class="c" style="left:774px;top:608px;width:80px;color:#000"><span>0FC6</span></div>
<div class="c" style="left:854px;top:608px;width:80px;color:#000"><span>A485</span></div>
<div class="c" style="left:934px;top:608px;width:80px;color:#000"><span>0038</span></div>
<div class="c" style="left:1031px;top:608px;width:80px;color:#000"><span>8D00</span></div>
<div class="c" style="left:1111px;top:608px;width:80px;color:#000"><span>E445</span></div>
<div class="c" style="left:1191px;top:608px;width:80px;color:#000"><span>FF50</span></div>
<div class="c" style="left:1271px;top:608px;width:80px;color:#000"><span>8035</span></div>
<div class="v" style="left:1366px;top:608px;color:#000"><span>;</span><span><i></i></span><span><i></i></span><span><i></i></span><span><i></i></span><span><i></i></span><span><i></i></span><span>8</span><span><i></i></span><span><i></i></span><span><i></i></span><span>E</span><span><i></i></span><span>P</span><span><i></i></span><span>5</span></div>
<div class="c" style="left:532px;top:644px;width:160px;color:#000"><span>010014B0</span></div>
<div class="c" style="left:694px;top:644px;width:80px;color:#000"><span>00C0</span></div>
<div class="c" style="left:774px;top:644px;width:80px;color:#000"><span>FF01</span></div>
<div class="c" style="left:854px;top:644px;width:80px;color:#000"><span>2035</span></div>
<div class="c" style="left:934px;top:644px;width:80px;color:#000"><span>00C0</span></div>
<div class="c" style="left:1031px;top:644px;width:80px;color:#000"><span>FF01</span></div>
<div class="c" style="left:1111px;top:644px;width:80px;color:#000"><span>9C15</span></div>
<div class="c" style="left:1191px;top:644px;width:80px;color:#000"><span>0012</span></div>
<div class="c" style="left:1271px;top:644px;width:80px;color:#000"><span>8501</span></div>
<div class="v" style="left:1366px;top:644px;color:#000"><span><i></i></span><span><i></i></span><span><i></i></span><span><i></i></span><span> </span><span>5</span><span><i></i></span><span><i></i></span><span><i></i></span><span><i></i></span><span><i></i></span><span><i></i></span><span><i></i></span><span><i></i></span><span><i></i></span><span><i></i></span></div>
<div class="c" style="left:532px;top:680px;width:160px;color:#000"><span>010014C0</span></div>
<div class="c" style="left:694px;top:680px;width:80px;color:#000"><span>75C0</span></div>
<div class="c" style="left:774px;top:680px;width:80px;color:#000"><span>8DBE</span></div>
<div class="c" style="left:854px;top:680px;width:80px;color:#000"><span>E445</span></div>
<div class="c" style="left:934px;top:680px;width:80px;color:#000"><span>FF50</span></div>
<div class="c" style="left:1031px;top:680px;width:80px;color:#000"><span>C815</span></div>
<div class="c" style="left:1111px;top:680px;width:80px;color:#000"><span>0012</span></div>
<div class="c" style="left:1191px;top:680px;width:80px;color:#000"><span>8D01</span></div>
<div class="c" style="left:1271px;top:680px;width:80px;color:#000"><span>E445</span></div>
<div class="v" style="left:1366px;top:680px;color:#000"><span>u</span><span><i></i></span><span><i></i></span><span><i></i></span><span><i></i></span><span>E</span><span><i></i></span><span>P</span><span><i></i></span><span><i></i></span><span><i></i></span><span><i></i></span><span><i></i></span><span><i></i></span><span><i></i></span><span>E</span></div>
<div class="c" style="left:532px;top:716px;width:160px;color:#000"><span>010014D0</span></div>
<div class="c" style="left:694px;top:716px;width:80px;color:#000"><span>FF50</span></div>
<div class="c" style="left:774px;top:716px;width:80px;color:#000"><span>D015</span></div>
<div class="c" style="left:854px;top:716px;width:80px;color:#000"><span>0012</span></div>
<div class="c" style="left:934px;top:716px;width:80px;color:#000"><span>EB01</span></div>
<div class="c" style="left:1031px;top:716px;width:80px;color:#000"><span>90A8</span></div>
<div class="c" style="left:1111px;top:716px;width:80px;color:#000"><span>9090</span></div>
<div class="c" style="left:1191px;top:716px;width:80px;color:#000"><span>9090</span></div>
<div class="c" style="left:1271px;top:716px;width:80px;color:#000"><span>FF8B</span></div>
<div class="v" style="left:1366px;top:716px;color:#000"><span><i></i></span><span>P</span><span><i></i></span><span><i></i></span><span><i></i></span><span><i></i></span><span><i></i></span><span><i></i></span><span><i></i></span><span><i></i></span><span><i></i></span><span><i></i></span><span><i></i></span><span><i></i></span><span><i></i></span><span><i></i></span></div>
<div class="c" style="left:532px;top:752px;width:160px;color:#000"><span>010014E0</span></div>
<div class="c" style="left:694px;top:752px;width:80px;color:#000"><span>8B55</span></div>
<div class="c" style="left:774px;top:752px;width:80px;color:#000"><span>56EC</span></div>
<div class="c" style="left:854px;top:752px;width:80px;color:#000"><span>8B57</span></div>
<div class="c" style="left:934px;top:752px;width:80px;color:#000"><span>0C7D</span></div>
<div class="c" style="left:1031px;top:752px;width:80px;color:#000"><span>FF83</span></div>
<div class="c" style="left:1111px;top:752px;width:80px;color:#000"><span>0F1C</span></div>
<div class="c" style="left:1191px;top:752px;width:80px;color:#000"><span>8086</span></div>
<div class="c" style="left:1271px;top:752px;width:80px;color:#000"><span>0000</span></div>
<div class="v" style="left:1366px;top:752px;color:#000"><span><i></i></span><span>U</span><span>V</span><span><i></i></span><span><i></i></span><span>W</span><span><i></i></span><span>}</span><span><i></i></span><span><i></i></span><span><i></i></span><span><i></i></span><span><i></i></span><span><i></i></span><span><i></i></span><span><i></i></span></div>
<div class="c" style="left:532px;top:788px;width:160px;color:#000"><span>010014F0</span></div>
<div class="c" style="left:694px;top:788px;width:80px;color:#000"><span>8B00</span></div>
<div class="c" style="left:774px;top:788px;width:80px;color:#000"><span>1475</span></div>
<div class="c" style="left:854px;top:788px;width:80px;color:#000"><span>C78B</span></div>
<div class="c" style="left:934px;top:788px;width:80px;color:#000"><span>112D</span></div>
<div class="c" style="left:1031px;top:788px;width:80px;color:#000"><span>0001</span></div>
<div class="c" style="left:1111px;top:788px;width:80px;color:#000"><span>0F00</span></div>
<div class="c" style="left:1191px;top:788px;width:80px;color:#000"><span>C484</span></div>
<div class="c" style="left:1271px;top:788px;width:80px;color:#000"><span>0002</span></div>
<div class="v" style="left:1366px;top:788px;color:#000"><span><i></i></span><span><i></i></span><span><i></i></span><span>u</span><span><i></i></span><span><i></i></span><span><i></i></span><span>-</span><span><i></i></span><span><i></i></span><span><i></i></span><span><i></i></span><span><i></i></span><span><i></i></span><span><i></i></span><span><i></i></span></div>
<div class="c" style="left:532px;top:824px;width:160px;color:#000"><span>01001500</span></div>
<div class="c" style="left:694px;top:824px;width:80px;color:#000"><span>4800</span></div>
<div class="c" style="left:774px;top:824px;width:80px;color:#000"><span>840F</span></div>
<div class="c" style="left:854px;top:824px;width:80px;color:#000"><span>03E8</span></div>
<div class="c" style="left:934px;top:824px;width:80px;color:#000"><span>0000</span></div>
<div class="c" style="left:1031px;top:824px;width:80px;color:#000"><span>E883</span></div>
<div class="c" style="left:1111px;top:824px;width:80px;color:#000"><span>0F04</span></div>
<div class="c" style="left:1191px;top:824px;width:80px;color:#000"><span>8284</span></div>
<div class="c" style="left:1271px;top:824px;width:80px;color:#000"><span>0005</span></div>
<div class="v" style="left:1366px;top:824px;color:#000"><span>H</span><span><i></i></span><span><i></i></span><span><i></i></span><span><i></i></span><span><i></i></span><span><i></i></span><span><i></i></span><span><i></i></span><span><i></i></span><span><i></i></span><span><i></i></span><span><i></i></span><span><i></i></span><span><i></i></span><span><i></i></span></div>
<div class="c" style="left:532px;top:860px;width:160px;color:#000"><span>01001510</span></div>
<div class="c" style="left:694px;top:860px;width:80px;color:#000"><span>4800</span></div>
<div class="c" style="left:774px;top:860px;width:80px;color:#000"><span>840F</span></div>
<div class="c" style="left:854px;top:860px;width:80px;color:#000"><span>0569</span></div>
<div class="c" style="left:934px;top:860px;width:80px;color:#000"><span>0000</span></div>
<div class="c" style="left:1031px;top:860px;width:80px;color:#000"><span>1C2D</span></div>
<div class="c" style="left:1111px;top:860px;width:80px;color:#000"><span>0001</span></div>
<div class="c" style="left:1191px;top:860px;width:80px;color:#000"><span>0F00</span></div>
<div class="c" style="left:1271px;top:860px;width:80px;color:#000"><span>B584</span></div>
<div class="v" style="left:1366px;top:860px;color:#000"><span>H</span><span><i></i></span><span><i></i></span><span><i></i></span><span><i></i></span><span>i</span><span><i></i></span><span><i></i></span><span><i></i></span><span>-</span><span><i></i></span><span><i></i></span><span><i></i></span><span><i></i></span><span><i></i></span><span><i></i></span></div>
<div class="c" style="left:532px;top:896px;width:160px;color:#000"><span>01001520</span></div>
<div class="c" style="left:694px;top:896px;width:80px;color:#000"><span>003D</span></div>
<div class="c" style="left:774px;top:896px;width:80px;color:#000"><span>2D00</span></div>
<div class="c" style="left:854px;top:896px;width:80px;color:#000"><span>00E6</span></div>
<div class="c" style="left:934px;top:896px;width:80px;color:#000"><span>0000</span></div>
<div class="c" style="left:1031px;top:896px;width:80px;color:#000"><span>840F</span></div>
<div class="c" style="left:1111px;top:896px;width:80px;color:#000"><span>3D85</span></div>
<div class="c" style="left:1191px;top:896px;width:80px;color:#000"><span>0000</span></div>
<div class="c" style="left:1271px;top:896px;width:80px;color:#000"><span>E82D</span></div>
<div class="v" style="left:1366px;top:896px;color:#000"><span><i></i></span><span>=</span><span>-</span><span><i></i></span><span><i></i></span><span><i></i></span><span><i></i></span><span><i></i></span><span><i></i></span><span><i></i></span><span>=</span><span><i></i></span><span><i></i></span><span><i></i></span><span><i></i></span><span>-</span></div>
<div class="c" style="left:532px;top:932px;width:160px;color:#000"><span>01001530</span></div>
<div class="c" style="left:694px;top:932px;width:80px;color:#000"><span>007C</span></div>
<div class="c" style="left:774px;top:932px;width:80px;color:#000"><span>0F00</span></div>
<div class="c" style="left:854px;top:932px;width:80px;color:#000"><span>5884</span></div>
<div class="c" style="left:934px;top:932px;width:80px;color:#000"><span>003D</span></div>
<div class="c" style="left:1031px;top:932px;width:80px;color:#000"><span>3B00</span></div>
<div class="c" style="left:1111px;top:932px;width:80px;color:#000"><span>7C3D</span></div>
<div class="c" style="left:1191px;top:932px;width:80px;color:#000"><span>00C0</span></div>
<div class="c" style="left:1271px;top:932px;width:80px;color:#000"><span>0F01</span></div>
<div class="v" style="left:1366px;top:932px;color:#000"><span><i></i></span><span>|</span><span><i></i></span><span><i></i></span><span>X</span><span><i></i></span><span><i></i></span><span>=</span><span>;</span><span><i></i></span><span>|</span><span>=</span><span><i></i></span><span><i></i></span><span><i></i></span><span><i></i></span></div>
<div class="c" style="left:532px;top:968px;width:160px;color:#000"><span>01001540</span></div>
<div class="c" style="left:694px;top:968px;width:80px;color:#000"><span>4884</span></div>
<div class="c" style="left:774px;top:968px;width:80px;color:#000"><span>003C</span></div>
<div class="c" style="left:854px;top:968px;width:80px;color:#000"><span>FF00</span></div>
<div class="c" style="left:934px;top:968px;width:80px;color:#000"><span>1475</span></div>
<div class="c" style="left:1031px;top:968px;width:80px;color:#000"><span>75FF</span></div>
<div class="c" style="left:1111px;top:968px;width:80px;color:#000"><span>5710</span></div>
<div class="c" style="left:1191px;top:968px;width:80px;color:#000"><span>75FF</span></div>
<div class="c" style="left:1271px;top:968px;width:80px;color:#000"><span>FF08</span></div>
<div class="v" style="left:1366px;top:968px;color:#000"><span>H</span><span><i></i></span><span><i></i></span><span>&lt;</span><span><i></i></span><span><i></i></span><span><i></i></span><span>u</span><span>u</span><span><i></i></span><span>W</span><span><i></i></span><span>u</span><span><i></i></span><span><i></i></span><span><i></i></span></div>
<div class="c" style="left:532px;top:1004px;width:160px;color:#000"><span>01001550</span></div>
<div class="c" style="left:694px;top:1004px;width:80px;color:#000"><span>B415</span></div>
<div class="c" style="left:774px;top:1004px;width:80px;color:#000"><span>0011</span></div>
<div class="c" style="left:854px;top:1004px;width:80px;color:#000"><span>5F01</span></div>
<div class="c" style="left:934px;top:1004px;width:80px;color:#000"><span>5D5E</span></div>
<div class="c" style="left:1031px;top:1004px;width:80px;color:#000"><span>10C2</span></div>
<div class="c" style="left:1111px;top:1004px;width:80px;color:#000"><span>3300</span></div>
<div class="c" style="left:1191px;top:1004px;width:80px;color:#000"><span>EBC0</span></div>
<div class="c" style="left:1271px;top:1004px;width:80px;color:#000"><span>90F6</span></div>
<div class="v" style="left:1366px;top:1004px;color:#000"><span><i></i></span><span><i></i></span><span><i></i></span><span><i></i></span><span>_</span><span><i></i></span><span>]</span><span>^</span><span><i></i></span><span><i></i></span><span>3</span><span><i></i></span><span><i></i></span><span><i></i></span><span><i></i></span><span><i></i></span></div>
<div class="c" style="left:532px;top:1040px;width:160px;color:#000"><span>01001560</span></div>
<div class="c" style="left:694px;top:1040px;width:80px;color:#000"><span>9090</span></div>
<div class="c" style="left:774px;top:1040px;width:80px;color:#000"><span>9090</span></div>
<div class="c" style="left:854px;top:1040px;width:80px;color:#000"><span>0D3B</span></div>
<div class="c" style="left:934px;top:1040px;width:80px;color:#000"><span>C010</span></div>
<div class="c" style="left:1031px;top:1040px;width:80px;color:#000"><span>0100</span></div>
<div class="c" style="left:1111px;top:1040px;width:80px;color:#000"><span>850F</span></div>
<div class="c" style="left:1191px;top:1040px;width:80px;color:#000"><span>8997</span></div>
<div class="c" style="left:1271px;top:1040px;width:80px;color:#000"><span>0000</span></div>
<div class="v" style="left:1366px;top:1040px;color:#000"><span><i></i></span><span><i></i></span><span><i></i></span><span><i></i></span><span><i></i></span><span>;</span><span><i></i></span><span><i></i></span><span><i></i></span><span><i></i></span><span><i></i></span><span><i></i></span><span><i></i></span><span><i></i></span><span><i></i></span><span><i></i></span></div>
<div class="a" style="left:690px;top:316px;width:166px;height:42px;border:6px solid #ed1c24"></div>
</body></html>
